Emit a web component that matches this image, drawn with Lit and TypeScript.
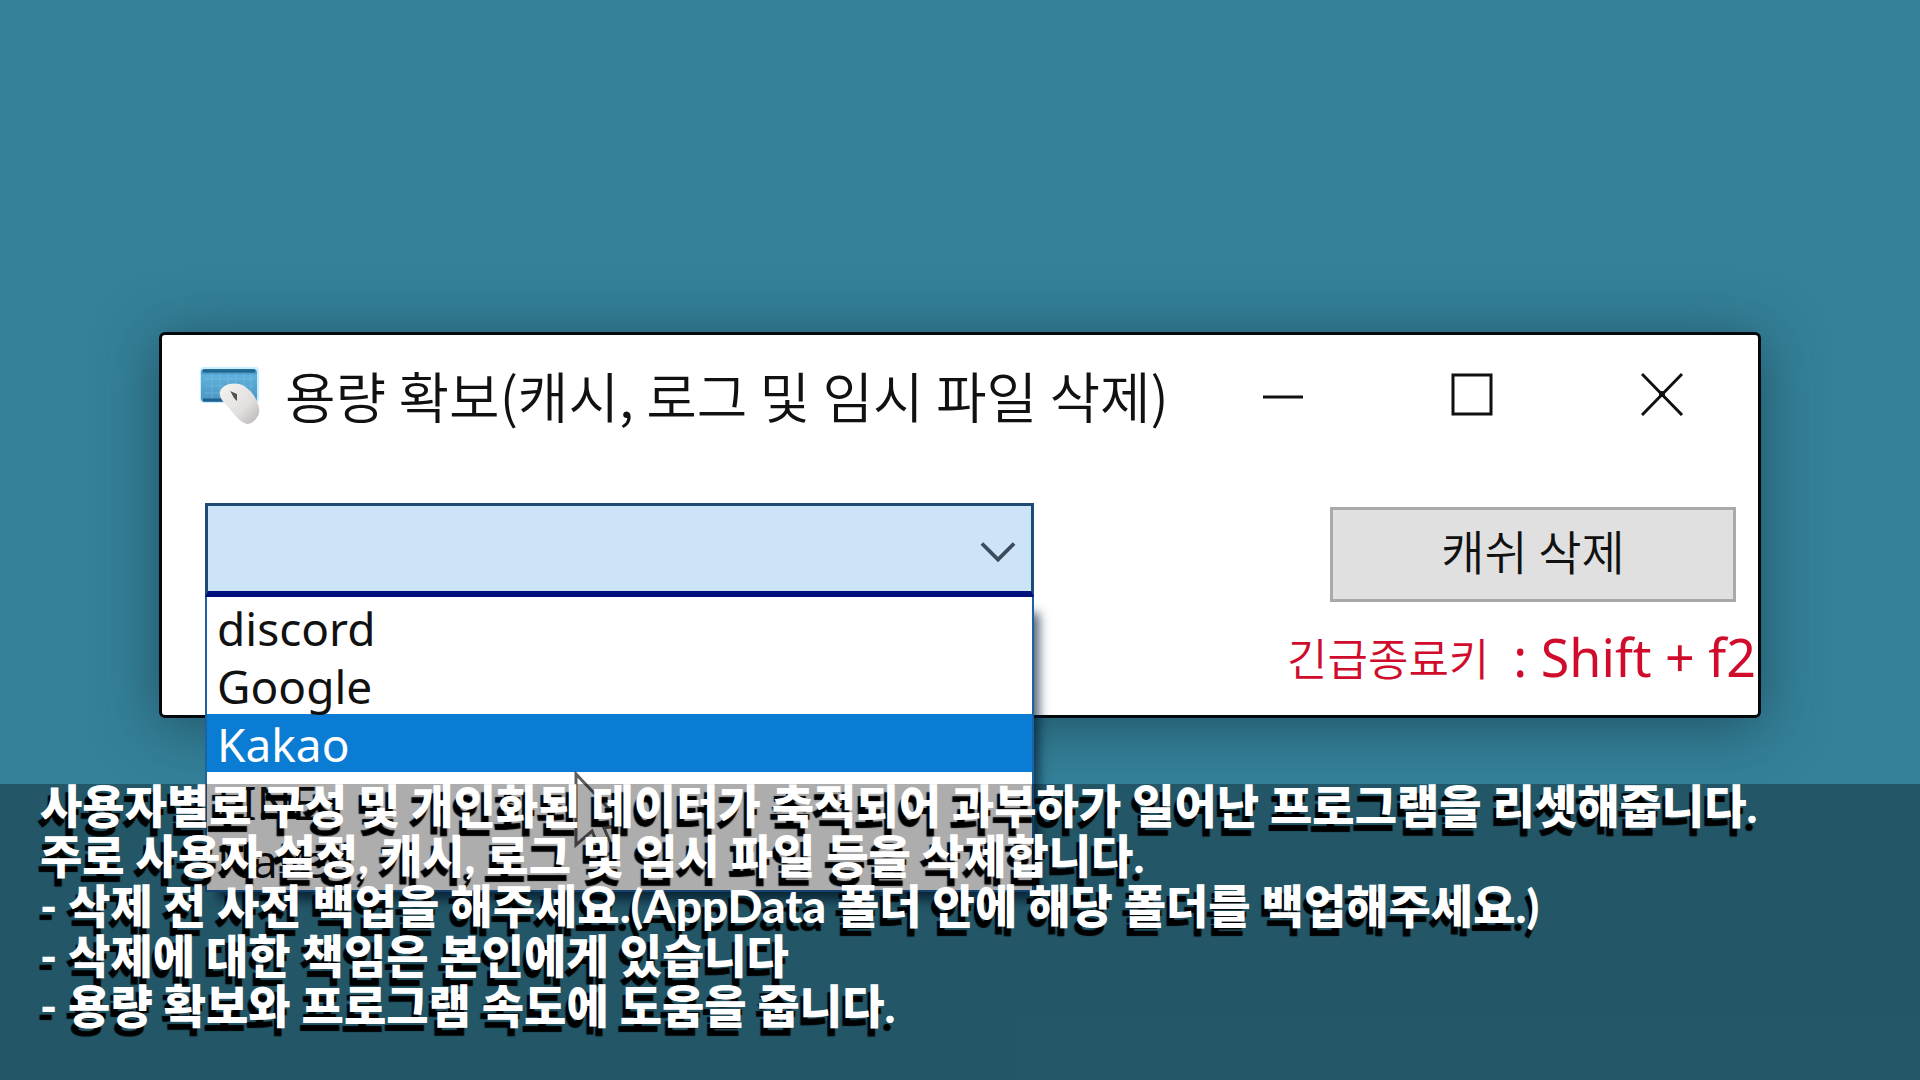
import { LitElement, html, css, svg } from "lit";
import { customElement, property, state } from "lit/decorators.js";
import { classMap } from "lit/directives/class-map.js";

const FOLDERS = ["discord", "Google", "Kakao", "LINE", "Naver"];

const CAPTION = [
  "사용자별로 구성 및 개인화된 데이터가 축적되어 과부하가 일어난 프로그램을 리셋해줍니다.",
  "주로 사용자 설정, 캐시, 로그 및 임시 파일 등을 삭제합니다.",
  "- 삭제 전 사전 백업을 해주세요.(AppData 폴더 안에 해당 폴더를 백업해주세요.)",
  "- 삭제에 대한 책임은 본인에게 있습니다",
  "- 용량 확보와 프로그램 속도에 도움을 줍니다.",
];

const appIcon = svg`
  <svg class="app-icon" viewBox="0 0 64 60" aria-hidden="true">
    <defs>
      <linearGradient id="keys" x1="0" y1="0" x2="0" y2="1">
        <stop offset="0" stop-color="#2b7aa8" />
        <stop offset="0.2" stop-color="#5fb0dc" />
        <stop offset="1" stop-color="#4a94c2" />
      </linearGradient>
      <linearGradient id="mouse" x1="0" y1="0" x2="1" y2="1">
        <stop offset="0" stop-color="#f6f4f2" />
        <stop offset="0.6" stop-color="#e2e0df" />
        <stop offset="1" stop-color="#b5b3b3" />
      </linearGradient>
    </defs>
    <rect x="1" y="3" width="59" height="36" rx="4" fill="#c9eeff" />
    <rect x="2" y="5" width="56" height="33" rx="4" fill="url(#keys)" />
    <path d="M4 7H56" stroke="#1f6690" stroke-width="3" />
    <path d="M4 36H26" stroke="#225f8c" stroke-width="3" />
    <path d="M6 15H54M6 22H54M6 29H40M13 10V34M21 10V34M29 10V34M37 10V22M45 10V22M52 10V28"
      stroke="#8acbee" stroke-width="1" opacity="0.4" />
    <path d="M21 28C23 20 36 17 45 22C52 26 58 34 60 44C62 52 54 60 48 60C42 59 36 52 30 44C25 39 20 34 21 28Z"
      fill="url(#mouse)" />
    <path d="M31 27L38 30L38 37C34 34 34 31 31 27Z" fill="#57504c" />
  </svg>`;

@customElement("title-bar")
export class TitleBar extends LitElement {
  @property() label = "";

  static styles = css`
    :host {
      display: flex;
      align-items: center;
      height: 118px;
      padding-left: 37px;
    }
    .app-icon {
      flex: none;
      width: 64px;
      height: 60px;
    }
    .label {
      flex: 1;
      margin: 0 0 0 22px;
      font-size: 55px;
      line-height: 80px;
      font-weight: 350;
      white-space: nowrap;
    }
    .control {
      flex: none;
      display: grid;
      place-items: center;
      width: 190px;
      height: 100%;
      padding: 0;
      border: 0;
      background: none;
    }
    .glyph {
      width: 44px;
      height: 44px;
      fill: none;
      stroke: #111;
      stroke-width: 3;
    }
  `;

  render() {
    return html`
      ${appIcon}
      <h1 class="label">${this.label}</h1>
      <button class="control" aria-label="최소화">
        <svg class="glyph" viewBox="0 0 44 44"><path d="M2 25H42" /></svg>
      </button>
      <button class="control" aria-label="최대화">
        <svg class="glyph" viewBox="0 0 44 44"><path d="M2 3H40V42H2Z" /></svg>
      </button>
      <button class="control" aria-label="닫기">
        <svg class="glyph" viewBox="0 0 44 44">
          <path d="M1 2L41 43M41 2L1 43" />
          <circle cx="21" cy="22" r="3" fill="#111" stroke="none" />
        </svg>
      </button>
    `;
  }
}

@customElement("folder-picker")
export class FolderPicker extends LitElement {
  @state() private active = "Kakao";

  static styles = css`
    :host {
      display: block;
      position: relative;
    }
    .box {
      display: block;
      box-sizing: border-box;
      width: 100%;
      height: 94px;
      padding: 0 80px 0 10px;
      appearance: none;
      border: 3px solid #1f4a73;
      border-bottom: 6px solid #00107c;
      border-radius: 0;
      outline: none;
      background: #cde3f7;
      font: inherit;
    }
    .chevron {
      position: absolute;
      right: 18px;
      top: 37px;
      width: 36px;
      height: 24px;
      fill: none;
      stroke: #3a4b5c;
      stroke-width: 4;
      pointer-events: none;
    }
    .list {
      position: absolute;
      top: 100%;
      left: 0;
      right: 0;
      margin: 0;
      padding: 1px 0 2px;
      list-style: none;
      border: 2px solid #1d62a3;
      border-top: 0;
      background: #fff;
      box-shadow: 9px 12px 10px -4px rgba(0, 25, 50, 0.7);
    }
    .item {
      height: 58px;
      padding-left: 10px;
      font-family: "Noto Sans", "Noto Sans CJK KR", sans-serif;
      font-size: 46px;
      line-height: 61px;
      color: #111;
    }
    .active {
      background: #0a7cd3;
      color: #fff;
    }
    .pointer {
      position: absolute;
      left: 367px;
      top: 268px;
      width: 56px;
      height: 90px;
      fill: rgba(255, 255, 255, 0.25);
      stroke: rgba(40, 40, 40, 0.75);
      stroke-width: 3;
      pointer-events: none;
    }
  `;

  render() {
    return html`
      <select class="box" aria-label="폴더">
        <option value=""></option>
        ${FOLDERS.map((f) => html`<option>${f}</option>`)}
      </select>
      <svg class="chevron" viewBox="0 0 38 24"><path d="M2 3L19 20L36 3" /></svg>
      <ul class="list" role="listbox" aria-label="폴더 목록">
        ${FOLDERS.map(
          (f) => html`<li
            class=${classMap({ item: true, active: f === this.active })}
            role="option"
            aria-selected=${f === this.active}
            @mouseenter=${() => (this.active = f)}
          >${f}</li>`
        )}
      </ul>
      <svg class="pointer" viewBox="0 0 56 90">
        <path d="M4 3V74L20 60L31 86L42 80L32 57L52 54Z" />
      </svg>
    `;
  }
}

@customElement("app-root")
export class AppRoot extends LitElement {
  static styles = css`
    :host {
      display: block;
      position: relative;
      box-sizing: border-box;
      min-height: 100vh;
      padding: 332px 159px 0;
      overflow: hidden;
      background: #348199;
      font-family: "Noto Sans CJK KR", sans-serif;
      color: #111;
    }
    .window {
      border: 3px solid #02090d;
      border-radius: 6px;
      background: #fff;
      box-shadow: 0 8px 60px rgba(20, 50, 65, 0.6);
    }
    .body {
      display: flex;
      justify-content: space-between;
      align-items: flex-start;
      padding: 50px 0 23px 43px;
    }
    .picker {
      flex: 0 1 829px;
    }
    .actions {
      display: flex;
      flex-direction: column;
      align-items: flex-end;
      padding-top: 4px;
    }
    .clear {
      width: 406px;
      height: 95px;
      margin-right: 22px;
      padding: 0 0 10px;
      border: 3px solid #a9a9a9;
      background: #e0e0e0;
      color: #111;
      font-family: inherit;
      font-size: 47px;
      font-weight: 350;
    }
    .hotkey {
      display: flex;
      align-items: center;
      gap: 24px;
      margin: 20px 2px 0 0;
      color: #cf0c2c;
      font-size: 44px;
      line-height: 70px;
      white-space: nowrap;
    }
    .hotkey-name {
      font-weight: 350;
    }
    .hotkey-keys {
      font-family: "Noto Sans", sans-serif;
      font-size: 52px;
    }
    .caption {
      position: absolute;
      left: 0;
      right: 0;
      bottom: 0;
      display: flex;
      flex-direction: column;
      gap: 6px;
      box-sizing: border-box;
      height: 296px;
      padding: 0 40px;
      background: rgba(0, 0, 0, 0.32);
      color: #fff;
      font-family: Lato, "Noto Sans CJK KR", sans-serif;
      font-size: 46px;
      font-weight: 900;
      line-height: 44px;
      text-shadow: -3px 8px 1px #000;
      white-space: nowrap;
    }
    .line {
      margin: 0;
    }
  `;

  render() {
    return html`
      <main class="window">
        <title-bar label="용량 확보(캐시, 로그 및 임시 파일 삭제)"></title-bar>
        <div class="body">
          <folder-picker class="picker"></folder-picker>
          <div class="actions">
            <button class="clear">캐쉬 삭제</button>
            <p class="hotkey">
              <span class="hotkey-name">긴급종료키</span>
              <span class="hotkey-keys">: Shift + f2</span>
            </p>
          </div>
        </div>
      </main>
      <section class="caption">
        ${CAPTION.map((text) => html`<p class="line">${text}</p>`)}
      </section>
    `;
  }
}
